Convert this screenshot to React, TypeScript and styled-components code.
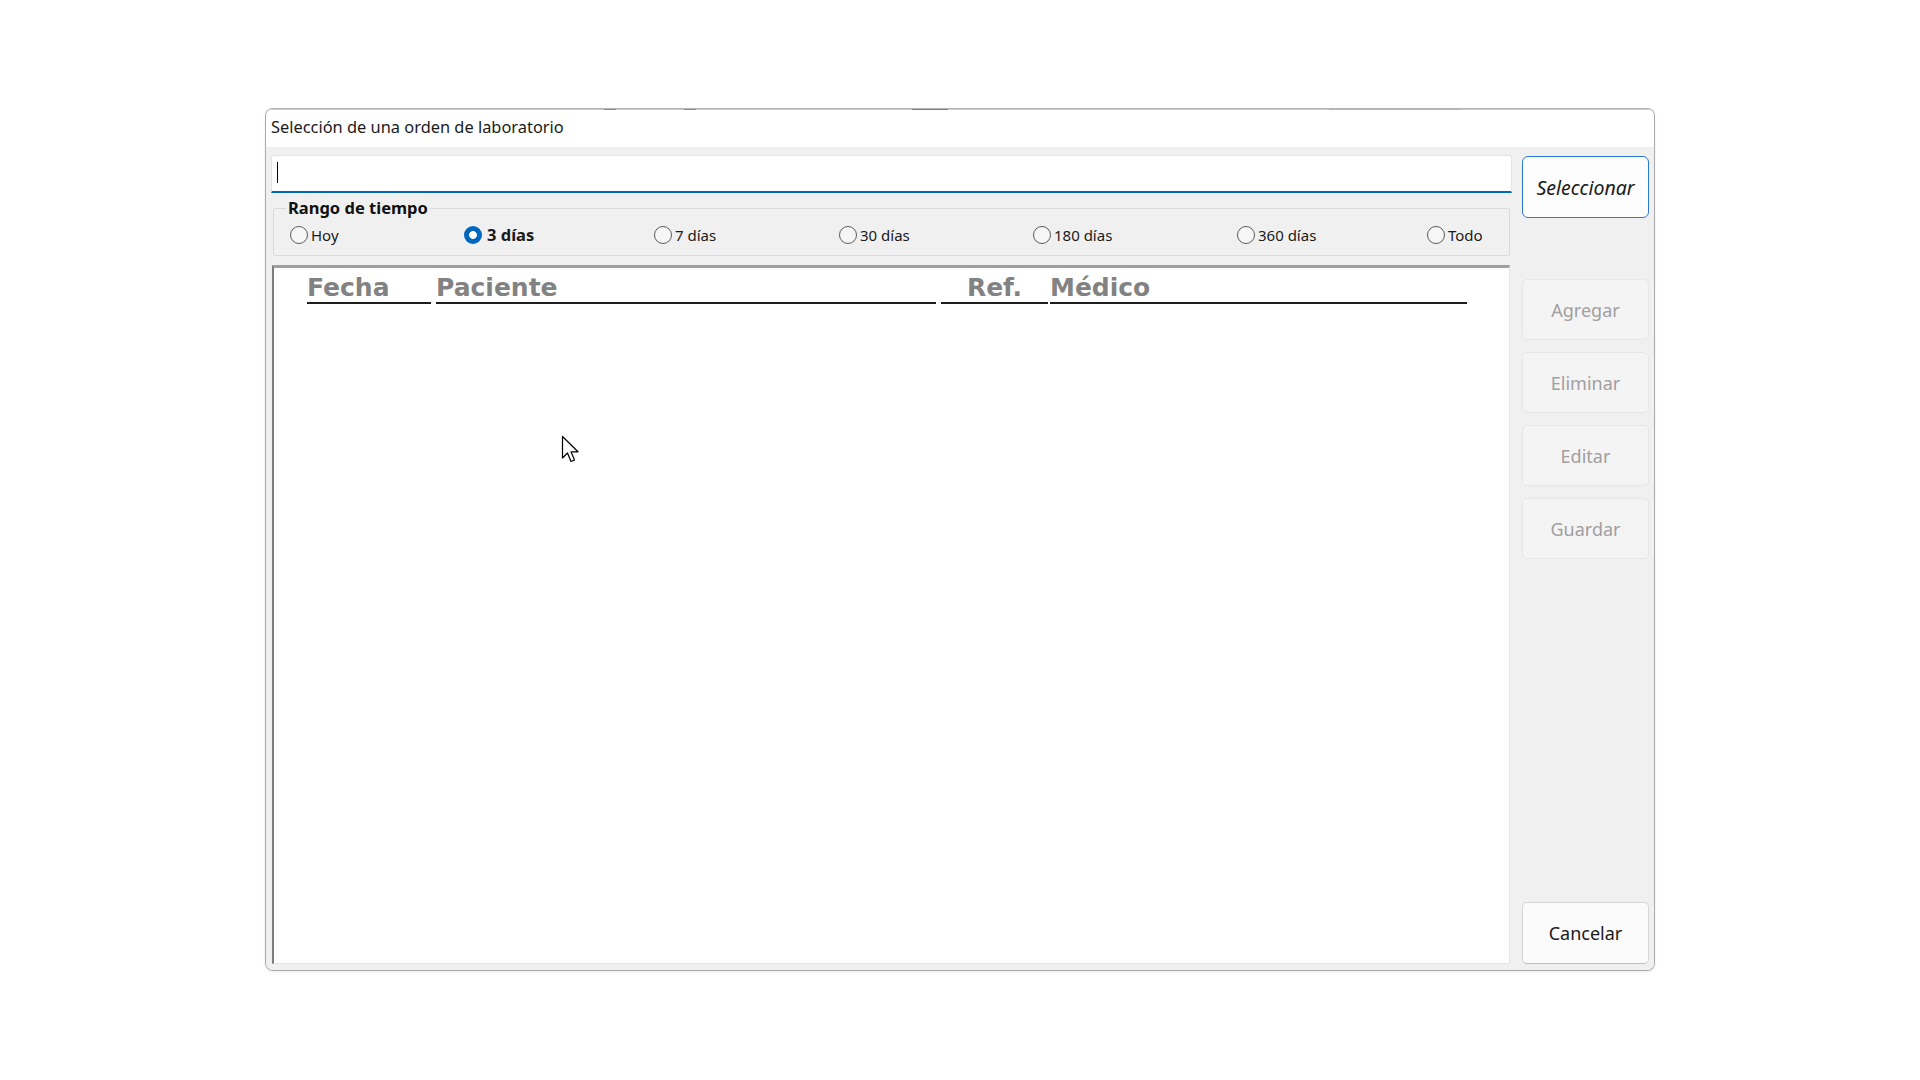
import React from "react";
import styled, { createGlobalStyle } from "styled-components";

const GlobalStyle = createGlobalStyle`
  html, body {
    margin: 0;
    padding: 0;
    background: #ffffff;
    font-family: "Noto Sans", "Open Sans", sans-serif;
  }
`;

interface RangeOption {
  label: string;
  width?: number;
  checked?: boolean;
}

const RANGES: RangeOption[] = [
  { label: "Hoy", width: 174 },
  { label: "3 días", width: 190, checked: true },
  { label: "7 días", width: 185 },
  { label: "30 días", width: 194 },
  { label: "180 días", width: 204 },
  { label: "360 días", width: 190 },
  { label: "Todo" },
];

interface Column {
  title: string;
  width: number;
  gap: number;
  align?: string;
}

const COLUMNS: Column[] = [
  { title: "Fecha", width: 124, gap: 0 },
  { title: "Paciente", width: 500, gap: 5 },
  { title: "Ref.", width: 107, gap: 5, align: "center" },
  { title: "Médico", width: 417, gap: 2 },
];

const SIDE_ACTIONS = ["Agregar", "Eliminar", "Editar", "Guardar"];

const App = () => {
  return (
    <>
      <GlobalStyle />
      <Screen>
        <Dialog>
          <TopEdge />
          <TitleBar>Selección de una orden de laboratorio</TitleBar>
          <Body>
            <MainColumn>
              <SearchBox>
                <Caret />
              </SearchBox>

              <RangeGroup>
                <RangeLegend>Rango de tiempo</RangeLegend>
                <RadioRow>
                  {RANGES.map((r) => (
                    <RadioItem key={r.label} width={r.width}>
                      <RadioCircle checked={r.checked} />
                      <RadioLabel checked={r.checked}>{r.label}</RadioLabel>
                    </RadioItem>
                  ))}
                </RadioRow>
              </RangeGroup>

              <OrderList>
                <HeaderRow>
                  {COLUMNS.map((c) => (
                    <HeaderCell
                      key={c.title}
                      width={c.width}
                      gap={c.gap}
                      textAlign={c.align}
                    >
                      {c.title}
                    </HeaderCell>
                  ))}
                </HeaderRow>
                <Pointer viewBox="0 0 20 30">
                  <path
                    d="M1.5 1.5 L1.5 23 L6.5 18 L10 26.5 L13.5 25 L10 16.8 L17 16.8 Z"
                    fill="#ffffff"
                    stroke="#000000"
                    strokeWidth="1.2"
                    strokeLinejoin="round"
                  />
                </Pointer>
              </OrderList>
            </MainColumn>

            <SideColumn>
              <PrimaryButton>Seleccionar</PrimaryButton>
              <SideActions>
                {SIDE_ACTIONS.map((a) => (
                  <DisabledButton key={a}>{a}</DisabledButton>
                ))}
              </SideActions>
              <CancelButton>Cancelar</CancelButton>
            </SideColumn>
          </Body>
        </Dialog>
      </Screen>
    </>
  );
};

export default App;

const Screen = styled.div`
  width: 1920px;
  height: 1080px;
  box-sizing: border-box;
  padding: 108px 0 0 265px;
`;

const Dialog = styled.div`
  width: 1390px;
  height: 863px;
  box-sizing: border-box;
  border: 1px solid #ababab;
  border-top-color: #b4b4b4;
  border-radius: 8px;
  overflow: hidden;
  display: flex;
  flex-direction: column;
  background: #f0f0f0;
  box-shadow: 0 1px 3px rgba(0, 0, 0, 0.08);
`;

const TopEdge = styled.div`
  height: 1px;
  flex: none;
  background: linear-gradient(
    to right,
    #c8c8c8 0px,
    #c8c8c8 338px,
    #e0704a 338px,
    #e0704a 350px,
    #c8c8c8 350px,
    #c8c8c8 418px,
    #8090a8 418px,
    #8090a8 430px,
    #c8c8c8 430px,
    #c8c8c8 646px,
    #5f86b8 646px,
    #5f86b8 682px,
    #c8c8c8 682px,
    #c8c8c8 1063px,
    #c9c43a 1063px,
    #c9c43a 1195px,
    #c8c8c8 1195px
  );
`;

const TitleBar = styled.div`
  height: 37px;
  flex: none;
  display: flex;
  align-items: center;
  padding: 0 5px 4px 5px;
  box-sizing: border-box;
  background: #ffffff;
  color: #1a1a1a;
  font-size: 16.4px;
`;

const Body = styled.div`
  flex: 1;
  display: flex;
  padding: 8px 5px 6px 5px;
  background: #f0f0f0;
  min-height: 0;
`;

const MainColumn = styled.div`
  width: 1241px;
  display: flex;
  flex-direction: column;
`;

const SearchBox = styled.div`
  height: 38px;
  box-sizing: border-box;
  background: #ffffff;
  border: 1px solid #e4e4e4;
  border-bottom: 2px solid #0067c0;
  border-radius: 3px 3px 0 0;
  display: flex;
  align-items: center;
  padding: 0 0 3px 5px;
`;

const Caret = styled.span`
  width: 1px;
  height: 21px;
  background: #000000;
`;

const RangeGroup = styled.fieldset`
  margin: 5px 2px 0 2px;
  padding: 0 0 10px 12px;
  border: 1px solid #dadada;
  border-radius: 2px;
  min-width: 0;
`;

const RangeLegend = styled.legend`
  padding: 0 2px;
  font-weight: 700;
  font-size: 16.5px;
  line-height: 20px;
  color: #111111;
`;

const RadioRow = styled.div`
  display: flex;
  align-items: center;
  height: 20px;
  margin: 7px 0 0 4px;
`;

const RadioItem = styled.div<{ width?: number }>`
  display: flex;
  align-items: center;
  gap: 3px;
  flex: none;
  width: ${(p) => (p.width ? `${p.width}px` : "auto")};
`;

const RadioCircle = styled.span<{ checked?: boolean }>`
  width: 18px;
  height: 18px;
  box-sizing: border-box;
  border-radius: 50%;
  flex: none;
  border: ${(p) => (p.checked ? "none" : "1px solid #5c5c5c")};
  background: ${(p) =>
    p.checked
      ? "radial-gradient(circle, #ffffff 0 3.6px, #0067c0 4.2px)"
      : "#f6f6f6"};
`;

const RadioLabel = styled.span<{ checked?: boolean }>`
  font-size: ${(p) => (p.checked ? "16.5px" : "15px")};
  font-weight: ${(p) => (p.checked ? 700 : 400)};
  color: #1a1a1a;
  line-height: 20px;
  white-space: nowrap;
  margin-left: ${(p) => (p.checked ? "2px" : "0")};
`;

const OrderList = styled.div`
  position: relative;
  flex: 1;
  margin: 9px 2px 0 1px;
  background: #ffffff;
  border-top: 3px solid #a0a0a0;
  border-left: 2px solid #7c7c7c;
  border-right: 1px solid #e6e6e6;
  border-bottom: 1px solid #e3e3e3;
`;

const HeaderRow = styled.div`
  display: flex;
  padding: 5px 0 0 33px;
`;

const HeaderCell = styled.div<{ width: number; gap: number; textAlign?: string }>`
  width: ${(p) => p.width}px;
  margin-left: ${(p) => p.gap}px;
  flex: none;
  font-family: "DejaVu Sans", "Noto Sans", sans-serif;
  font-weight: 700;
  font-size: 25px;
  line-height: 29px;
  color: #828282;
  text-align: ${(p) => p.textAlign || "left"};
  border-bottom: 2px solid #1e1e1e;
  white-space: nowrap;
`;

const Pointer = styled.svg`
  position: absolute;
  left: 287px;
  top: 167px;
  width: 20px;
  height: 30px;
`;

const SideColumn = styled.div`
  width: 127px;
  margin-left: 10px;
  display: flex;
  flex-direction: column;
`;

const ButtonBase = styled.div`
  display: flex;
  align-items: center;
  justify-content: center;
  box-sizing: border-box;
  border-radius: 5px;
  font-size: 18px;
  flex: none;
`;

const PrimaryButton = styled(ButtonBase)`
  height: 62px;
  margin-top: 1px;
  background: #fdfdfd;
  border: 1.5px solid #2a78d0;
  border-radius: 6px;
  font-style: italic;
  font-size: 19.5px;
  color: #1a1a1a;
`;

const SideActions = styled.div`
  display: flex;
  flex-direction: column;
  gap: 12px;
  margin-top: 61px;
`;

const DisabledButton = styled(ButtonBase)`
  height: 61px;
  background: #f4f4f4;
  border: 1px solid #e6e6e6;
  color: #a19fa1;
`;

const CancelButton = styled(ButtonBase)`
  height: 62px;
  margin-top: auto;
  background: #fbfbfb;
  border: 1px solid #d6d6d6;
  border-bottom-color: #bdbdbd;
  color: #1a1a1a;
`;
